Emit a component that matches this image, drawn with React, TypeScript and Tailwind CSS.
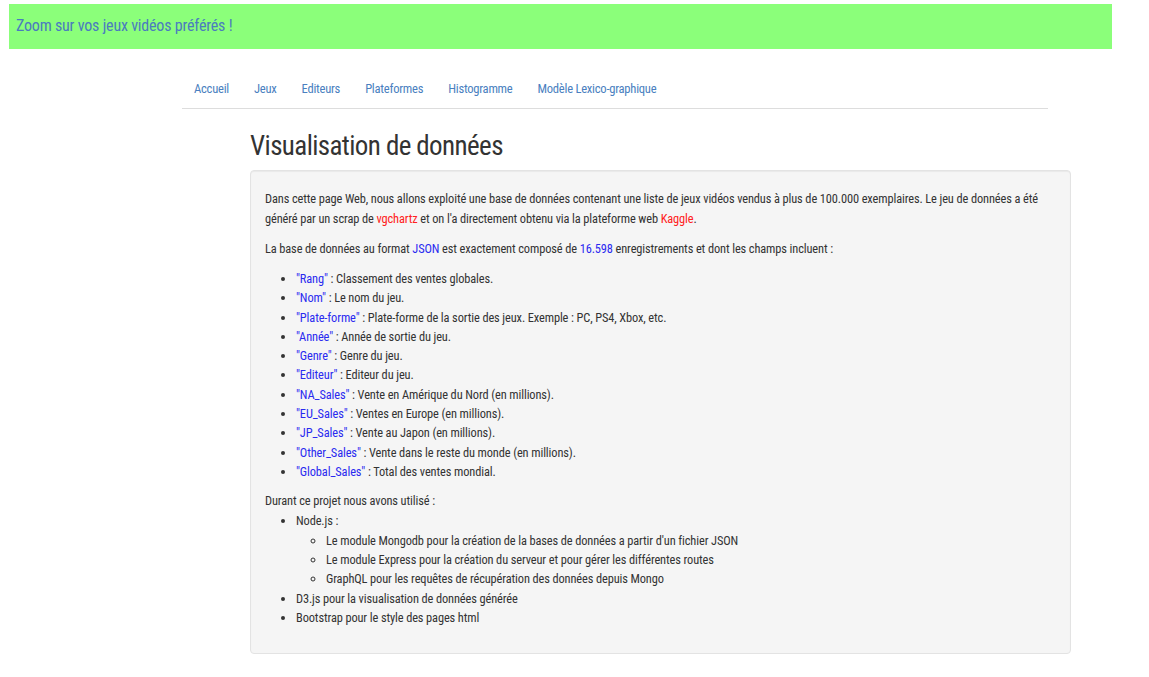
import React from "react";

const fields: [string, string][] = [
  ['"Rang"', " : Classement des ventes globales."],
  ['"Nom"', " : Le nom du jeu."],
  ['"Plate-forme"', " : Plate-forme de la sortie des jeux. Exemple : PC, PS4, Xbox, etc."],
  ['"Année"', " : Année de sortie du jeu."],
  ['"Genre"', " : Genre du jeu."],
  ['"Editeur"', " : Editeur du jeu."],
  ['"NA_Sales"', " : Vente en Amérique du Nord (en millions)."],
  ['"EU_Sales"', " : Ventes en Europe (en millions)."],
  ['"JP_Sales"', " : Vente au Japon (en millions)."],
  ['"Other_Sales"', " : Vente dans le reste du monde (en millions)."],
  ['"Global_Sales"', " : Total des ventes mondial."],
];

const navItems = ["Accueil", "Jeux", "Editeurs", "Plateformes", "Histogramme", "Modèle Lexico-graphique"];

export default function App() {
  return (
    <div className="min-h-[677px] bg-white text-[#333] text-[12.4px] tracking-[-0.12px] font-['Roboto_Condensed','Liberation_Sans',sans-serif]">
      <div className="pt-[4px] pl-[9px] w-[1112px]">
        <div className="h-[45px] bg-[#8bff7a] flex items-center pl-[7px] pb-[2px] text-[16px] tracking-[-0.2px] text-[#4a7bbf]">
          Zoom sur vos jeux vidéos préférés !
        </div>
      </div>
      <div className="ml-[182px] w-[866px] mt-[26px] pt-[4px] border-b border-[#ddd] flex h-[34px] items-start">
        {navItems.map((n, i) => (
          <a key={n} className={`text-[#4a7fc0] text-[12.6px] tracking-[-0.25px] leading-[20px] ${i === 0 ? "ml-[12px]" : "ml-[25px]"}`}>
            {n}
          </a>
        ))}
      </div>
      <div className="ml-[250px] w-[821px]">
        <h1 className="text-[27px] tracking-[-0.6px] leading-[34px] mt-[20px] mb-[7px] text-[#333]">Visualisation de données</h1>
        <div className="bg-[#f5f5f5] border border-[#e3e3e3] rounded-[4px] px-[14px] pt-[18px] h-[484px] shadow-[inset_0_1px_1px_rgba(0,0,0,0.05)]">
          <p className="leading-[20px] mb-[10px]">
            Dans cette page Web, nous allons exploité une base de données contenant une liste de jeux vidéos vendus à plus de 100.000 exemplaires. Le jeu de données a été
            généré par un scrap de <span className="text-[#ff2020]">vgchartz</span> et on l'a directement obtenu via la plateforme web <span className="text-[#ff2020]">Kaggle</span>.
          </p>
          <p className="leading-[20px] mb-[10px]">
            La base de données au format <span className="text-[#2a2af0]">JSON</span> est exactement composé de <span className="text-[#2a2af0]">16.598</span> enregistrements et dont les champs incluent :
          </p>
          <ul className="list-disc pl-[31px] mb-[10px]">
            {fields.map(([k, v]) => (
              <li key={k} className="leading-[19.3px]">
                <span className="text-[#2a2af0]">{k}</span>
                {v}
              </li>
            ))}
          </ul>
          <p className="leading-[20px]">Durant ce projet nous avons utilisé :</p>
          <ul className="list-disc pl-[31px]">
            <li className="leading-[19.4px]">
              Node.js :
              <ul className="list-[circle] pl-[30px]">
                <li className="leading-[19.4px]">Le module Mongodb pour la création de la bases de données a partir d'un fichier JSON</li>
                <li className="leading-[19.4px]">Le module Express pour la création du serveur et pour gérer les différentes routes</li>
                <li className="leading-[19.4px]">GraphQL pour les requêtes de récupération des données depuis Mongo</li>
              </ul>
            </li>
            <li className="leading-[19.4px]">D3.js pour la visualisation de données générée</li>
            <li className="leading-[19.4px]">Bootstrap pour le style des pages html</li>
          </ul>
        </div>
      </div>
    </div>
  );
}
